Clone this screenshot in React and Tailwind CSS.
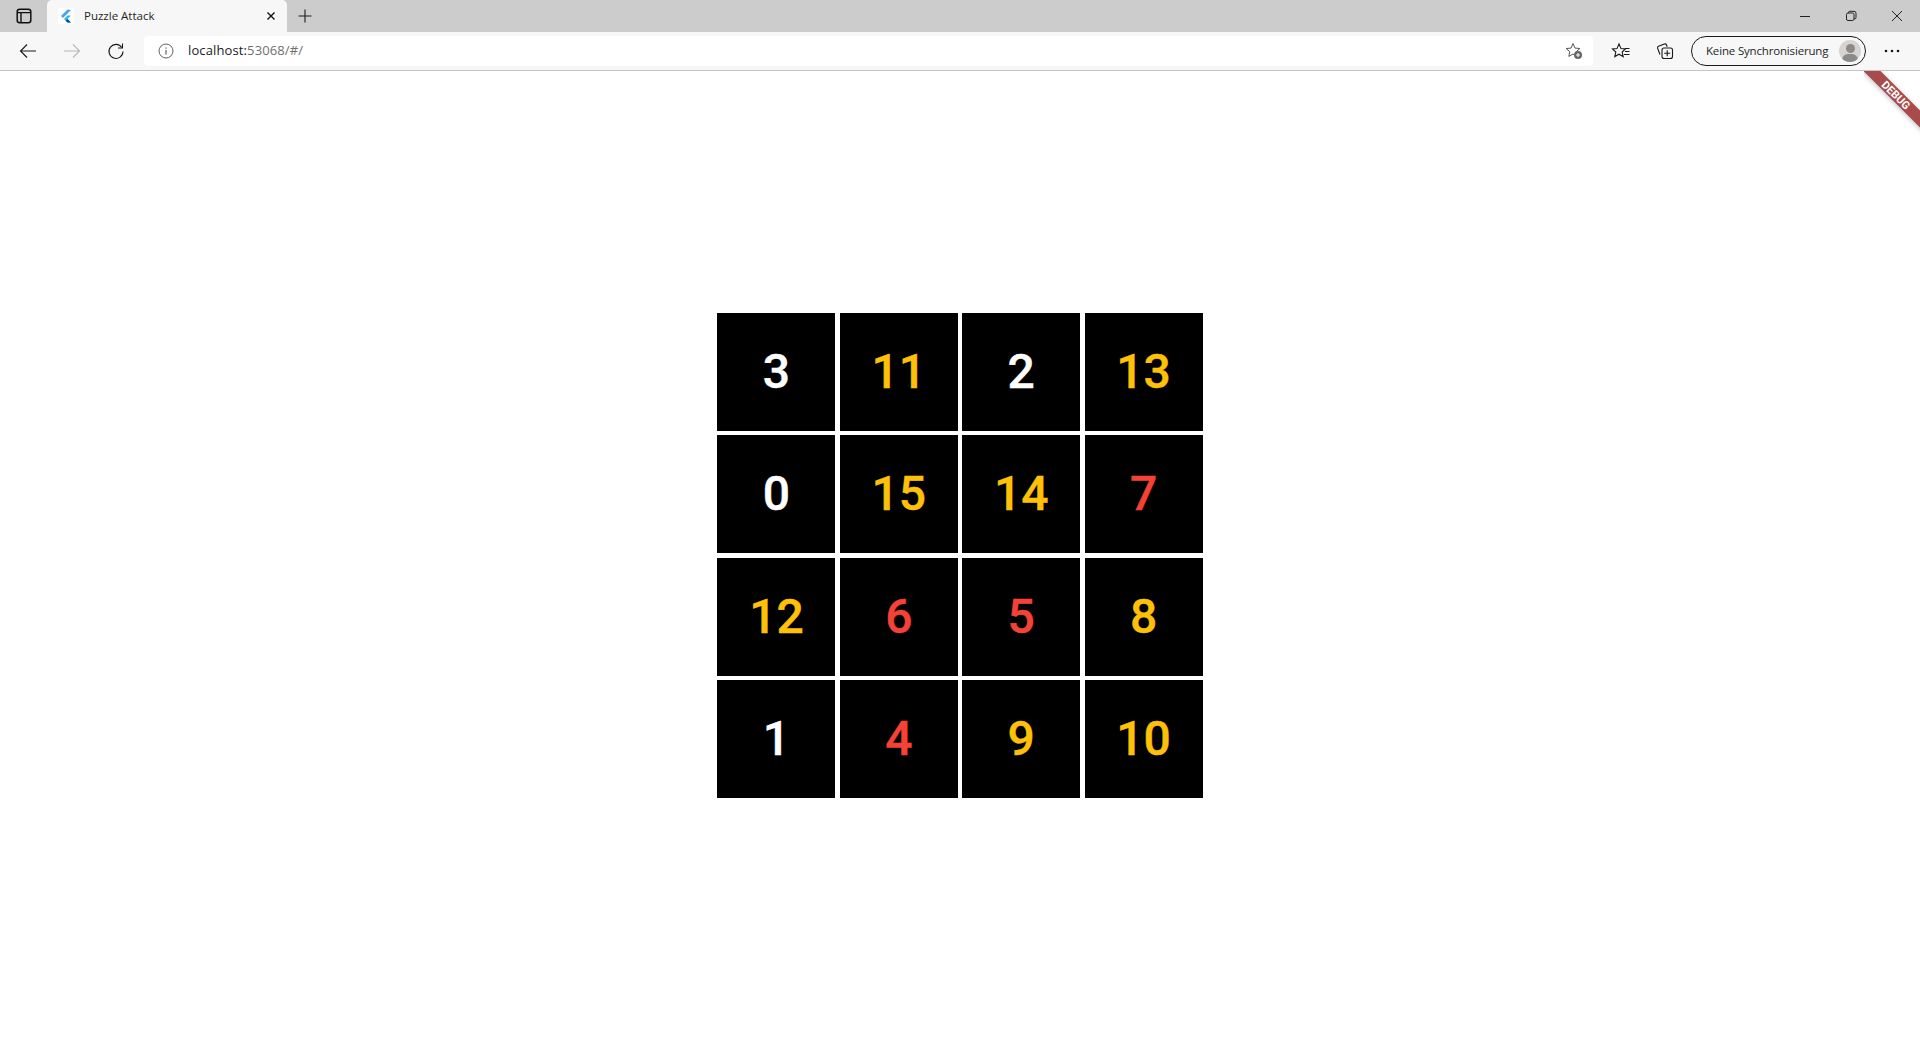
const cells = [
  ["3", "w"], ["11", "y"], ["2", "w"], ["13", "y"],
  ["0", "w"], ["15", "y"], ["14", "y"], ["7", "r"],
  ["12", "y"], ["6", "r"], ["5", "r"], ["8", "y"],
  ["1", "w"], ["4", "r"], ["9", "y"], ["10", "y"],
];

function Icon({ children, className = "", w = 20, h = 20 }) {
  return (
    <svg width={w} height={h} viewBox={`0 0 ${w} ${h}`} fill="none" stroke="currentColor" strokeWidth="1" className={className}>
      {children}
    </svg>
  );
}

function Cell({ n, c }) {
  const color = c === "w" ? "text-white" : c === "y" ? "text-[#ffc107]" : "text-[#f44336]";
  return (
    <div className={`w-[118px] h-[118px] bg-black flex items-center justify-center text-[48px] font-medium [-webkit-text-stroke:0.4px_currentColor] font-['Roboto',sans-serif] leading-none ${color}`}>
      {n}
    </div>
  );
}

export default function App() {
  return (
    <div className="w-full h-[1040px] flex flex-col bg-white overflow-hidden relative font-['Open_Sans','Noto_Sans',sans-serif]">
      <div className="h-[32px] bg-[#cccccc] flex items-end shrink-0">
        <div className="w-[47px] h-[32px] flex items-center justify-center text-[#111]">
          <Icon w={16} h={16}>
            <rect x="1.2" y="1.2" width="13.6" height="13.6" rx="2.5" strokeWidth="1.5" />
            <path d="M1.5 4.6h13M5 4.6v10" strokeWidth="1.4" />
          </Icon>
        </div>
        <div className="w-[240px] h-[32px] bg-[#f7f7f7] rounded-t-[5px] flex items-center pl-[11px] pr-[10px]">
          <div className="w-[16px] h-[16px] bg-white flex items-center justify-center">
            <svg width="12" height="14" viewBox="0 0 12 14">
              <path d="M7.5 0.5 L1 7 L3 9 L11 1 Z" fill="#42a5f5" />
              <path d="M7.5 6.5 L4 10 L7.5 13.5 L11 13.5 L7.5 10 L11 6.5 Z" fill="#29b6f6" />
              <path d="M5.7 11.7 L7.5 13.5 L11 13.5 L7.5 10 Z" fill="#0d47a1" />
            </svg>
          </div>
          <span className="ml-[10px] text-[11.5px] text-[#1f1f1f] flex-1">Puzzle Attack</span>
          <Icon w={12} h={12} className="text-[#111]">
            <path d="M2.5 2.5l7 7M9.5 2.5l-7 7" strokeWidth="1.4" />
          </Icon>
        </div>
        <div className="w-[36px] h-[32px] flex items-center justify-center text-[#1a1a1a]">
          <Icon w={16} h={16}>
            <path d="M8 1.5v13M1.5 8h13" strokeWidth="1.1" />
          </Icon>
        </div>
        <div className="flex-1" />
        <div className="h-[32px] flex items-center text-[#222]">
          <div className="w-[46px] flex justify-center">
            <Icon w={12} h={12}><path d="M1 6.5h10" /></Icon>
          </div>
          <div className="w-[46px] flex justify-center">
            <Icon w={12} h={12}>
              <rect x="1.5" y="3" width="7.5" height="7.5" rx="1.5" />
              <path d="M3.5 3V2.5a1.2 1.2 0 0 1 1.2-1.2h4.3a2 2 0 0 1 2 2v4.3a1.2 1.2 0 0 1-1.2 1.2H9" />
            </Icon>
          </div>
          <div className="w-[46px] flex justify-center">
            <Icon w={12} h={12}><path d="M1 1l10 10M11 1L1 11" /></Icon>
          </div>
        </div>
      </div>

      <div className="h-[39px] bg-[#f7f7f7] border-b border-[#c4c4c4] flex items-center shrink-0">
        <div className="w-[144px] flex items-center pl-[18px] gap-[24px] text-[#1a1a1a]">
          <Icon w={20} h={20}><path d="M18 10H2.5M9 3.5L2.5 10 9 16.5" strokeWidth="1.1" /></Icon>
          <Icon w={20} h={20} className="text-[#b8b8b8]"><path d="M2 10h15.5M11 3.5l6.5 6.5-6.5 6.5" strokeWidth="1.1" /></Icon>
          <Icon w={20} h={20}>
            <path d="M15.8 6.5A7 7 0 1 0 17 10.5" strokeWidth="1.1" />
            <path d="M16.5 2.5v4.5H12" strokeWidth="1.1" />
          </Icon>
        </div>
        <div className="w-[1449px] h-[30px] bg-white rounded-[4px] flex items-center pl-[14px] pr-[10px]">
          <Icon w={16} h={16} className="text-[#5f5f5f]">
            <circle cx="8" cy="8" r="7" />
            <path d="M8 7v4.5M8 4.5v1.3" strokeWidth="1.2" />
          </Icon>
          <span className="ml-[14px] text-[13px] tracking-[0.12px] flex-1">
            <span className="text-[#1a1a1a]">localhost:</span>
            <span className="text-[#6f6f6f]">53068/#/</span>
          </span>
          <svg width="18" height="18" viewBox="0 0 18 18" fill="none" className="text-[#555]">
            <path d="M8 1.5l2 4.6 4.8.4-3.6 3.2 1 4.7L8 12l-4.2 2.4 1-4.7L1.2 6.5 6 6.1z" stroke="currentColor" strokeWidth="1" />
            <circle cx="13" cy="13" r="4" fill="#666" />
            <path d="M13 11v4M11 13h4" stroke="#fff" strokeWidth="1" />
          </svg>
        </div>
        <div className="w-[44px] ml-[6px] flex justify-center text-[#1a1a1a]">
          <svg width="20" height="18" viewBox="0 0 20 18" fill="none" stroke="currentColor" strokeWidth="1.1">
            <path d="M8 2l2 4.6 4.4.4-3.2 3 1 4.6L8 12.2l-4.2 2.4 1-4.6L1.5 7l4.5-.4z" />
            <path d="M14 6.5h4.5M14 9.5h4.5M13 12.5h5.5" />
          </svg>
        </div>
        <div className="w-[44px] flex justify-center text-[#1a1a1a]">
          <svg width="18" height="18" viewBox="0 0 18 18" fill="none" stroke="currentColor" strokeWidth="1.1">
            <path d="M4 12.5L1.6 6.2a1.5 1.5 0 0 1 .9-1.9L8.5 2a1.5 1.5 0 0 1 1.9.8l.8 2" />
            <rect x="6" y="6" width="10.5" height="10.5" rx="2" />
            <path d="M11.2 8.3v6M8.2 11.3h6" />
          </svg>
        </div>
        <div className="w-[175px] h-[30px] ml-[4px] rounded-full border border-[#1a1a1a] flex items-center pl-[14px] pr-[4px] text-[11.5px] text-[#1f1f1f]">
          <span className="flex-1 whitespace-nowrap tracking-[-0.17px]">Keine Synchronisierung</span>
          <div className="w-[22px] h-[22px] rounded-full bg-[#d6d3d1] relative overflow-hidden shrink-0">
            <div className="absolute left-[6.5px] top-[3.5px] w-[9px] h-[9px] rounded-full bg-[#8a8a88]" />
            <div className="absolute left-[3px] top-[14px] w-[16px] h-[12px] rounded-full bg-[#8a8a88]" />
          </div>
        </div>
        <div className="flex-1 flex justify-center pr-[2px] text-[#1a1a1a]">
          <svg width="16" height="4" viewBox="0 0 16 4" fill="currentColor">
            <circle cx="2" cy="2" r="1.3" /><circle cx="8" cy="2" r="1.3" /><circle cx="14" cy="2" r="1.3" />
          </svg>
        </div>
      </div>

      <div className="flex-1 flex items-center justify-center">
        <div className="grid grid-cols-4 gap-[4.4px]">
          {cells.map(([n, c]) => <Cell key={n} n={n} c={c} />)}
        </div>
      </div>

      <div className="absolute top-[71px] right-0 w-[56px] h-[66px] overflow-hidden pointer-events-none">
        <div className="absolute left-[-13px] top-[18px] w-[90px] h-[12px] rotate-45 bg-[#a94a4c] shadow-[0_1px_5px_rgba(0,0,0,0.25)] flex items-center justify-center text-white text-[11px] font-bold font-['Roboto',sans-serif] leading-none">
          DEBUG
        </div>
      </div>
    </div>
  );
}
